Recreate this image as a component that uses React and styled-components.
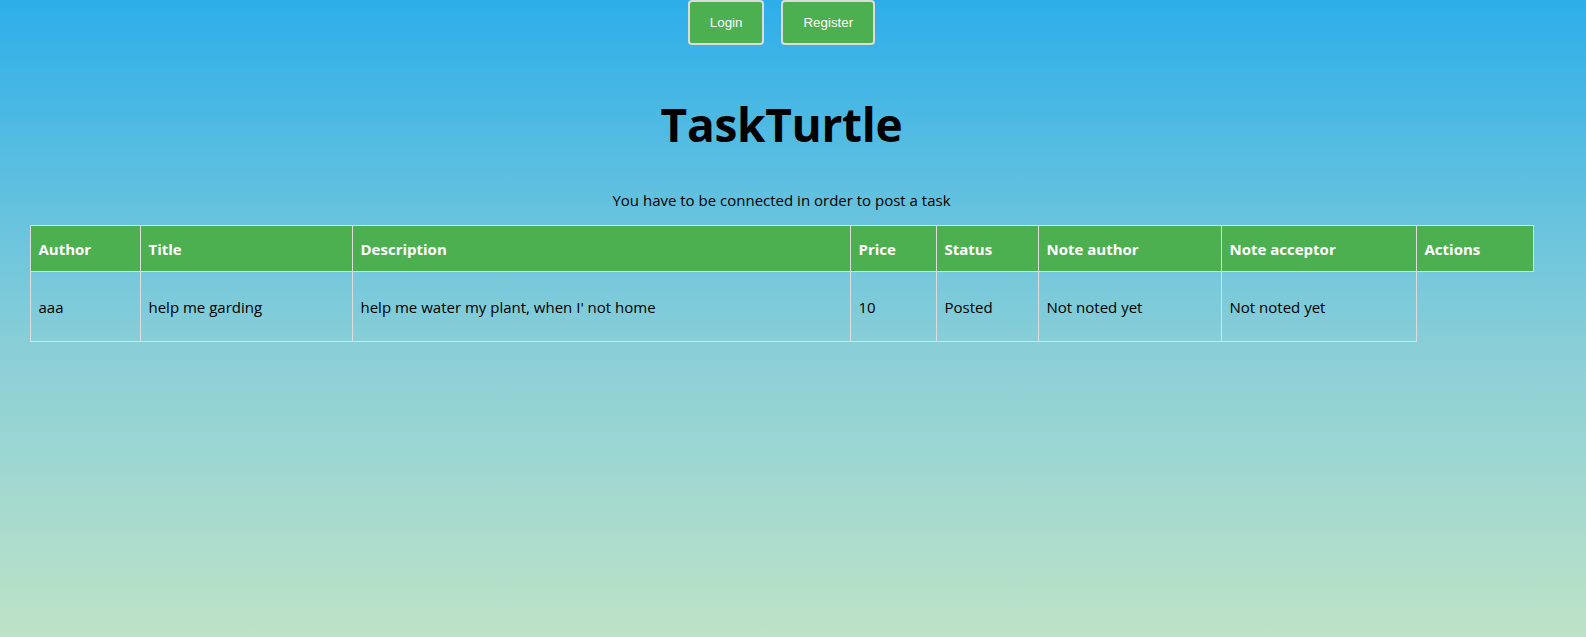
import React from 'react';
import styled, { createGlobalStyle } from 'styled-components';

const GlobalStyle = createGlobalStyle`
  html, body {
    margin: 0;
    padding: 0;
    min-height: 100%;
  }
  body {
    min-height: 637px;
    background: linear-gradient(to bottom, #2daeea 0%, #8acfd7 55%, #bde3c7 100%);
    font-family: 'Segoe UI', 'Open Sans', sans-serif;
    color: #000;
  }
`;

const Page = styled.div`
  width: 1563px;
  display: flex;
  flex-direction: column;
  align-items: center;
`;

const Nav = styled.nav`
  display: flex;
  gap: 17px;
`;

const NavButton = styled.button`
  background-color: #4caf50;
  color: #fff;
  border: 2px solid #dcdcdc;
  border-radius: 4px;
  padding: 0 ${(p) => p.$pad}px;
  height: 45px;
  font-family: 'Liberation Sans', Arial, sans-serif;
  font-size: 13.33px;
  cursor: pointer;
`;

const Title = styled.h1`
  margin: 49px 0 0;
  font-size: 46px;
  font-weight: 700;
  line-height: 60px;
  letter-spacing: -0.3px;
`;

const Notice = styled.p`
  margin: 36px 0 15px;
  font-size: 15px;
  line-height: 20px;
`;

const Table = styled.table`
  width: 1503px;
  border-collapse: collapse;
  table-layout: fixed;
  font-size: 15px;
`;

const HeadCell = styled.th`
  background-color: #4caf50;
  color: #fff;
  font-weight: 700;
  text-align: left;
  padding: 0 8px;
  height: 45px;
  border: 1px solid #dddddd;
`;

const Cell = styled.td`
  padding: 0 8px;
  height: 69px;
  border: 1px solid #dddddd;
`;

const columns = [
  { label: 'Author', width: 110 },
  { label: 'Title', width: 212 },
  { label: 'Description', width: 498 },
  { label: 'Price', width: 86 },
  { label: 'Status', width: 102 },
  { label: 'Note author', width: 183 },
  { label: 'Note acceptor', width: 195 },
  { label: 'Actions', width: 117 },
];

const tasks = [
  {
    author: 'aaa',
    title: 'help me garding',
    description: "help me water my plant, when I' not home",
    price: 10,
    status: 'Posted',
    noteAuthor: 'Not noted yet',
    noteAcceptor: 'Not noted yet',
  },
];

export default function App() {
  return (
    <>
      <GlobalStyle />
      <Page>
        <Nav>
          <NavButton $pad={20}>Login</NavButton>
          <NavButton $pad={20}>Register</NavButton>
        </Nav>
        <Title>TaskTurtle</Title>
        <Notice>You have to be connected in order to post a task</Notice>
        <Table>
          <colgroup>
            {columns.map((c) => (
              <col key={c.label} style={{ width: c.width }} />
            ))}
          </colgroup>
          <thead>
            <tr>
              {columns.map((c) => (
                <HeadCell key={c.label}>{c.label}</HeadCell>
              ))}
            </tr>
          </thead>
          <tbody>
            {tasks.map((t, i) => (
              <tr key={i}>
                <Cell>{t.author}</Cell>
                <Cell>{t.title}</Cell>
                <Cell>{t.description}</Cell>
                <Cell>{t.price}</Cell>
                <Cell>{t.status}</Cell>
                <Cell>{t.noteAuthor}</Cell>
                <Cell>{t.noteAcceptor}</Cell>
              </tr>
            ))}
          </tbody>
        </Table>
      </Page>
    </>
  );
}
